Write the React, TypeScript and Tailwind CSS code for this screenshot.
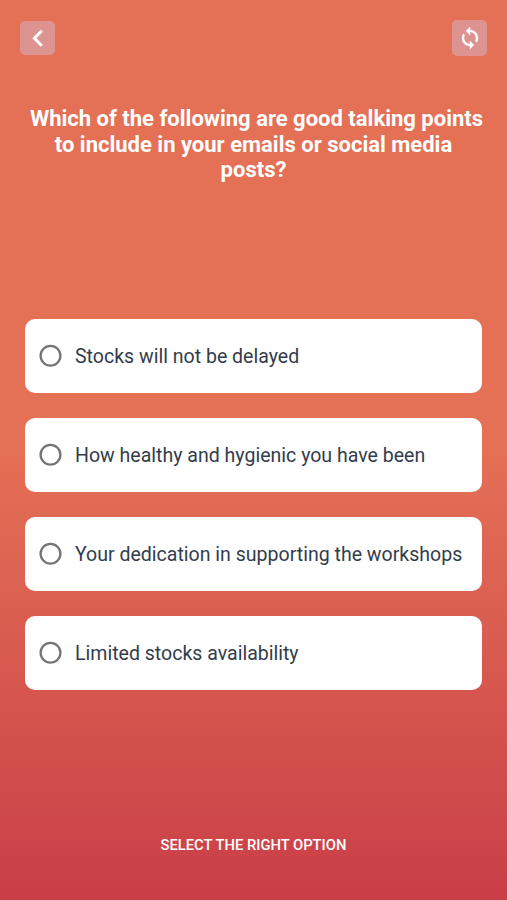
import { useState } from 'react';

const OPTIONS = [
  'Stocks will not be delayed',
  'How healthy and hygienic you have been',
  'Your dedication in supporting the workshops',
  'Limited stocks availability',
];

interface OptionCardProps {
  label: string;
  selected: boolean;
  onSelect: () => void;
}

function OptionCard({ label, selected, onSelect }: OptionCardProps) {
  return (
    <button
      type="button"
      role="radio"
      aria-checked={selected}
      onClick={onSelect}
      className="flex h-[74px] w-full items-center gap-[13px] rounded-[10px] bg-white pl-[14px] text-left"
    >
      <svg viewBox="0 0 23 23" className="mb-px size-[23px] shrink-0">
        <circle cx="11.5" cy="11.8" r="9.9" fill="none" stroke="#757575" strokeWidth="2.3" />
        {selected && <circle cx="11.5" cy="11.8" r="5.5" fill="#757575" />}
      </svg>
      <span className="pt-px whitespace-nowrap text-[19.54px] leading-[25px] text-[#333c4b]">{label}</span>
    </button>
  );
}

export default function App() {
  const [selected, setSelected] = useState<number | null>(null);

  return (
    <main className="flex h-[900px] w-full flex-col bg-linear-to-b from-[#e47055] from-50% to-[#c93e48] font-['Roboto',sans-serif]">
      <header className="flex h-14 shrink-0 items-center justify-between pt-5 pr-[19.6px] pl-[20.4px]">
        <button type="button" aria-label="Back" className="flex size-[34.5px] items-center justify-center rounded-[5px] bg-[#dd9490]">
          <svg viewBox="0 0 34 34" className="size-[34px]" fill="none" stroke="white" strokeWidth="3">
            <path d="M20.8 9.8 13.4 17.3l7.4 7.4" />
          </svg>
        </button>
        <button
          type="button"
          aria-label="Restart"
          onClick={() => setSelected(null)}
          className="flex size-[35.5px] items-center justify-center rounded-[5px] bg-[#dd9490]"
        >
          <svg viewBox="0 0 24 24" className="size-6 fill-white stroke-white stroke-[0.4]">
            <path d="M12 4V1L8 5l4 4V6c3.31 0 6 2.69 6 6 0 1.01-.25 1.97-.7 2.8l1.46 1.46C19.54 15.03 20 13.57 20 12c0-4.42-3.58-8-8-8zm0 14c-3.31 0-6-2.69-6-6 0-1.01.25-1.97.7-2.8L5.24 7.74C4.46 8.97 4 10.43 4 12c0 4.42 3.58 8 8 8v3l4-4-4-4v3z" />
          </svg>
        </button>
      </header>

      <h1 className="mt-[50px] h-[213px] shrink-0 text-center text-[22px] leading-[25.6px] font-bold text-white">
        <span className="pl-1.5">Which of the following are good talking points</span>
        <br />
        to include in your emails or social media
        <br />
        posts?
      </h1>

      <div role="radiogroup" className="flex flex-col gap-[25px] px-[25px]">
        {OPTIONS.map((label, i) => (
          <OptionCard key={label} label={label} selected={selected === i} onSelect={() => setSelected(i)} />
        ))}
      </div>

      <p className="mt-[145px] text-center text-[14.75px] leading-5 font-medium text-white">SELECT THE RIGHT OPTION</p>
    </main>
  );
}
